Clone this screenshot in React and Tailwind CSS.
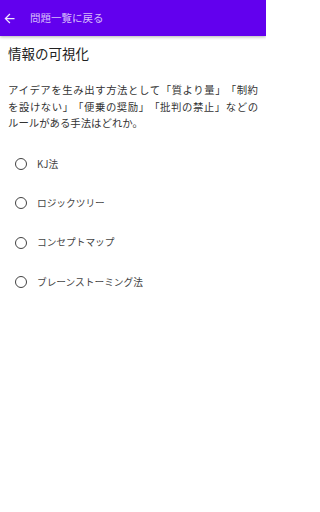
import React from 'react';

const options = ['KJ法', 'ロジックツリー', 'コンセプトマップ', 'ブレーンストーミング法'];

// keeps the corner brackets full width (no punctuation trimming)
const B = ({ c }) => <span className="inline-block w-[1em]">{c}</span>;

const App = () => {
  return (
    <div
      className="w-[266px] h-[512px] bg-white overflow-hidden"
      style={{ fontFamily: '"Noto Sans CJK JP", "Noto Sans", sans-serif' }}
    >
      <header className="h-[36px] bg-[#6200ee] flex items-center shadow-[0_1px_3px_rgba(0,0,0,0.3)]">
        <svg viewBox="0 0 24 24" className="w-[15px] h-[15px] ml-[2px] fill-white/90">
          <path d="M20 11H7.83l5.59-5.59L12 4l-8 8 8 8 1.41-1.41L7.83 13H20v-2z" />
        </svg>
        <span className="ml-[13px] text-[10.5px] text-white/75">問題一覧に戻る</span>
      </header>

      <div className="px-2">
        <h1 className="mt-[8px] text-[13.5px] leading-[18px] text-[#212121]">情報の可視化</h1>
        <div className="mt-[20px] text-[10.4px] leading-[16.5px] text-[#333333] whitespace-nowrap">
          <div className="text-justify [text-align-last:justify]">
            アイデアを生み出す方法として<B c="「" />質より量<B c="」" /><B c="「" />制約
          </div>
          <div className="text-justify [text-align-last:justify]">
            を設けない<B c="」" /><B c="「" />便乗の奨励<B c="」" /><B c="「" />批判の禁止<B c="」" />などの
          </div>
          <div>ルールがある手法はどれか。</div>
        </div>

        <ul className="mt-[13px]">
          {options.map((opt) => (
            <li key={opt} className="h-[39.3px] flex items-center">
              <span className="ml-[7px] w-[12px] h-[12px] rounded-full border-[1.5px] border-[#424242]" />
              <span className="ml-[10px] text-[9.7px] text-[#444444]">{opt}</span>
            </li>
          ))}
        </ul>
      </div>
    </div>
  );
};

export default App;
